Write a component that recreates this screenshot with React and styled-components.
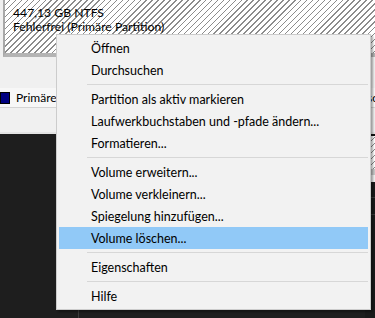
import React from "react";
import styled, { createGlobalStyle } from "styled-components";

const Global = createGlobalStyle`
  html, body { margin: 0; padding: 0; }
  body {
    width: 375px; height: 318px; overflow: hidden;
    background: #f0f0f0;
    font-family: Lato, "Segoe UI", "Liberation Sans", sans-serif;
    font-size: 12px;
    color: #000;
  }
`;

const hatch = `
  background-color: #fff;
  background-image: repeating-linear-gradient(
    135deg,
    #fff 0px,
    #fff 3.1px,
    #8c8c8c 3.1px,
    #8c8c8c 4.2px
  );
`;

const Screen = styled.div`
  position: relative;
  width: 375px;
  height: 318px;
  overflow: hidden;
  display: flex;
  flex-direction: column;
`;

const DiskRow = styled.div`
  display: flex;
  padding-left: 3px;
  height: 57px;
  flex: none;
`;

const HatchBox = styled.div`
  flex: 1;
  ${hatch}
  border-left: 2px solid #a8a8a8;
  border-bottom: 4px solid #b4b4b4;
  padding: 6px 0 0 8px;
  line-height: 14px;
`;

const VolLine = styled.div`
  white-space: nowrap;
  font-size: 12.2px;
`;

const Gap = styled.div`
  height: ${(p) => p.$h}px;
  flex: none;
`;

const Legend = styled.div`
  height: 19px;
  flex: none;
  display: flex;
  align-items: center;
  background: #f7f7f7;
  border-bottom: 1px solid #d4d4d4;
  white-space: nowrap;
  overflow: hidden;
`;

const LegendItem = styled.div`
  display: flex;
  align-items: center;
  gap: 6px;
  margin-right: ${(p) => p.$gap || 16}px;
  flex: none;
`;

const Swatch = styled.span`
  width: 10px;
  height: 12px;
  background: ${(p) => p.$color};
  border: 1px solid #000;
  box-sizing: border-box;
`;

const Lower = styled.div`
  flex: 1;
  display: flex;
  border-top: 2px solid #e4e4e4;
`;

const DarkPane = styled.div`
  flex: 1;
  background: #1e1e1e;
  display: flex;
`;

const DarkSide = styled.div`
  width: 78px;
  border-right: 1px solid #3c3c3c;
`;

const SidePane = styled.div`
  width: 10px;
  flex: none;
  display: flex;
  flex-direction: column;
  background: #1a1a1a;
`;

const SideHatch = styled.div`
  height: 33px;
  ${hatch}
  border-top: 2px solid #111;
  border-bottom: 6px solid #c8c8c8;
`;

const SideLight = styled.div`
  height: 7px;
  background: #f0f0f0;
`;

const SideLine = styled.div`
  height: ${(p) => p.$h}px;
  border-bottom: 1px solid #3a3a3a;
`;

const Menu = styled.div`
  position: absolute;
  left: 56px;
  top: 34px;
  width: 309px;
  background: #f2f2f2;
  border: 1px solid #cccccc;
  padding: 2px;
  box-shadow: 2px 2px 2px rgba(0, 0, 0, 0.35);
`;

const Item = styled.div`
  height: 22px;
  display: flex;
  align-items: center;
  padding-left: 32px;
  white-space: nowrap;
  font-size: 12.5px;
  background: ${(p) => (p.$active ? "#91c9f7" : "transparent")};
`;

const Sep = styled.div`
  height: 7px;
  display: flex;
  align-items: center;
  padding-left: 28px;
  &::after {
    content: "";
    flex: 1;
    height: 1px;
    background: #d7d7d7;
  }
`;

const menu = [
  "Öffnen",
  "Durchsuchen",
  "-",
  "Partition als aktiv markieren",
  "Laufwerkbuchstaben und -pfade ändern...",
  "Formatieren...",
  "-",
  "Volume erweitern...",
  "Volume verkleinern...",
  "Spiegelung hinzufügen...",
  "Volume löschen...",
  "-",
  "Eigenschaften",
  "-",
  "Hilfe",
];

export default function App() {
  return (
    <>
      <Global />
      <Screen>
        <DiskRow>
          <HatchBox>
            <VolLine>447,13 GB NTFS</VolLine>
            <VolLine>Fehlerfrei (Primäre Partition)</VolLine>
          </HatchBox>
        </DiskRow>
        <Gap $h={31} />
        <Legend>
          <LegendItem $gap={240}>
            <Swatch $color="#000080" />
            <span>Primäre Partition</span>
          </LegendItem>
          <LegendItem>
            <span>Logisches Laufwerk</span>
          </LegendItem>
        </Legend>
        <Gap $h={24} />
        <Lower>
          <DarkPane>
            <DarkSide />
          </DarkPane>
          <SidePane>
            <SideHatch />
            <SideLight />
            <SideLine $h={15} />
            <SideLine $h={16} />
          </SidePane>
        </Lower>
        <Menu>
          {menu.map((m, i) =>
            m === "-" ? (
              <Sep key={i} />
            ) : (
              <Item key={i} $active={m === "Volume löschen..."}>
                {m}
              </Item>
            )
          )}
        </Menu>
      </Screen>
    </>
  );
}
